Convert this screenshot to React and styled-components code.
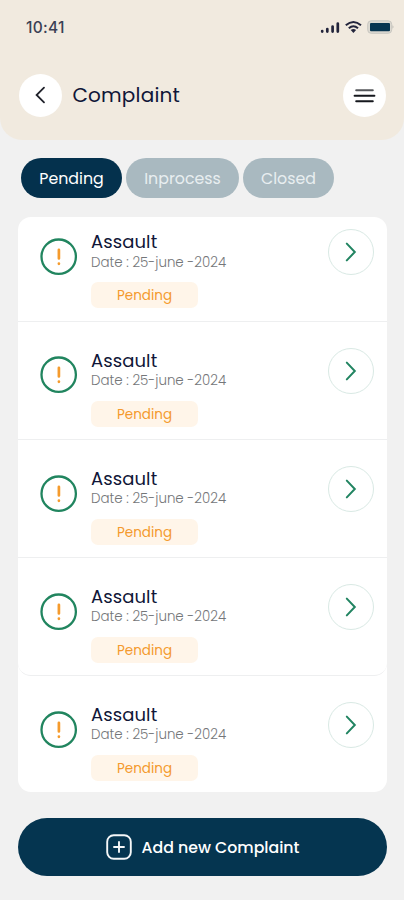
import React from "react";
import styled, { createGlobalStyle } from "styled-components";

const GlobalStyle = createGlobalStyle`
  * { box-sizing: border-box; }
  body { margin: 0; background: #f1f1f1; }
  button { border: 0; padding: 0; font: inherit; }
`;

const Screen = styled.div`
  width: 404px;
  height: 900px;
  display: flex;
  flex-direction: column;
  overflow: hidden;
  background: #f1f1f1;
  font-family: Poppins, Inter, sans-serif;
  color: #101638;
`;

const Header = styled.header`
  height: 140px;
  flex: none;
  background: #f1eadf;
  border-radius: 0 0 22px 22px;
`;

const StatusBar = styled.div`
  display: flex;
  justify-content: space-between;
  align-items: center;
  height: 55px;
  padding: 0 10px 0 26px;
`;

const Clock = styled.span`
  font-size: 15.5px;
  font-weight: 500;
  font-family: Inter, sans-serif;
  letter-spacing: 0.3px;
  color: #3a4054;
`;

const StatusIcons = styled.svg`
  display: block;
  width: 75px;
  height: 16px;
  margin-bottom: 2px;
`;

const TitleBar = styled.div`
  display: flex;
  align-items: center;
  height: 44px;
  margin-top: 18px;
  padding: 0 18px 0 19.4px;
`;

const RoundButton = styled.button`
  width: 43px;
  height: 43px;
  flex: none;
  border-radius: 50%;
  background: #fff;
  display: grid;
  place-items: center;
`;

const Title = styled.h1`
  flex: 1;
  margin: 0 0 0 10px;
  font-size: 20px;
  line-height: 30px;
  font-weight: 400;
  letter-spacing: 0.2px;
`;

const Tabs = styled.nav`
  display: flex;
  gap: 4px;
  margin: 18px 0 0 21px;
`;

const Tab = styled.button`
  width: ${(p) => p.$width}px;
  height: 40px;
  border-radius: 20px;
  font-size: 15.8px;
  color: ${(p) => (p.$active ? "#fff" : "#e8eef0")};
  background: ${(p) => (p.$active ? "#04314d" : "#a9b9c0")};
`;

const List = styled.ul`
  list-style: none;
  margin: 19px 17px 0 18px;
  padding: 0;
  flex: none;
  height: 575px;
  background: #fff;
  border-radius: 13px;
`;

const Row = styled.li`
  display: flex;
  align-items: flex-start;
  height: 118.1px;
  padding: 26.2px 13px 0 22px;
  border-bottom: 1.5px solid #eeeff0;
  &:first-child { height: 104.5px; padding-top: 12.3px; }
  &:nth-child(4) { border-radius: 0 0 13px 13px; }
  &:last-child { border-bottom: 0; }
`;

const AlertIcon = styled.svg`
  flex: none;
  width: 38px;
  height: 38px;
  margin-top: 8.8px;
`;

const Details = styled.div`
  flex: 1;
  margin-left: 13px;
  display: flex;
  flex-direction: column;
  align-items: flex-start;
  white-space: nowrap;
`;

const Name = styled.div`
  font-size: 18px;
  line-height: 26px;
  letter-spacing: 0.1px;
`;

const DateText = styled.div`
  margin-top: -0.5px;
  font-size: 13.4px;
  line-height: 16px;
  font-weight: 300;
  color: #747679;
`;

const Badge = styled.div`
  width: 107px;
  height: 26px;
  margin-top: 11.4px;
  border-radius: 7px;
  background: #fff5e9;
  color: #f49a2d;
  font-size: 13.5px;
  line-height: 27px;
  text-align: center;
`;

const OpenButton = styled(RoundButton)`
  width: 46px;
  height: 46px;
  border: 1px solid #d9e9e4;
`;

const AddButton = styled.button`
  flex: none;
  height: 58px;
  margin: 26px 17px 0 18px;
  border-radius: 29px;
  background: #053550;
  color: #fff;
  display: flex;
  align-items: center;
  justify-content: center;
  gap: 10px;
  font-size: 15.75px;
  font-weight: 500;
`;

const tabs = [
  { label: "Pending", width: 101, active: true },
  { label: "Inprocess", width: 113 },
  { label: "Closed", width: 91 },
];

const complaints = Array.from({ length: 5 }, (_, id) => ({
  id,
  name: "Assault",
  date: "Date : 25-june -2024",
  status: "Pending",
}));

function Status() {
  return (
    <StatusIcons viewBox="0 0 75 16" fill="none">
      <path
        d="M3.2 12v.6M8.3 10v2.6M13.6 7.5v5.1M18.8 4.5v8.1"
        stroke="#22243b"
        strokeWidth="2.7"
        strokeLinecap="round"
      />
      <path
        d="M26.8 6.3Q34.4-.4 42 6.3M29.8 9.3Q34.4 5.1 39 9.3"
        stroke="#22243b"
        strokeWidth="2"
      />
      <path d="M31.7 11.1q2.7-2.2 5.4 0l-2.7 3z" fill="#22243b" />
      <rect x="48.7" y="1.8" width="24" height="12.5" rx="3.5" fill="#dcd9d1" stroke="#c9c7c1" />
      <path d="M73.6 6.3q1.6 1.7 0 3.4z" fill="#aaaaa6" />
      <rect x="51" y="4" width="20" height="8.3" rx="1" fill="#073550" />
    </StatusIcons>
  );
}

export default function App() {
  return (
    <Screen>
      <GlobalStyle />
      <Header>
        <StatusBar>
          <Clock>10:41</Clock>
          <Status />
        </StatusBar>
        <TitleBar>
          <RoundButton aria-label="Back">
            <svg width="20" height="20" fill="none" stroke="#20222b" strokeWidth="1.8" strokeLinecap="round">
              <path d="M13 2.6 5.6 10l7.4 7.4" />
            </svg>
          </RoundButton>
          <Title>Complaint</Title>
          <RoundButton aria-label="Menu">
            <svg width="24" height="18" fill="none" stroke="#15171d" strokeWidth="2" strokeLinecap="round">
              <path d="M3.2 4.2h16.6" stroke="#55575b" />
              <path d="M1.6 9.7h19.8M3.2 15.2h16.6" />
            </svg>
          </RoundButton>
        </TitleBar>
      </Header>
      <Tabs>
        {tabs.map((t) => (
          <Tab key={t.label} $width={t.width} $active={t.active}>
            {t.label}
          </Tab>
        ))}
      </Tabs>
      <List>
        {complaints.map((c) => (
          <Row key={c.id}>
            <AlertIcon viewBox="0 0 38 38" fill="none">
              <circle cx="18.7" cy="18.7" r="17.2" stroke="#21855f" strokeWidth="2.3" />
              <path d="M18.9 11.8v8.7M18.9 25.6v.2" stroke="#f59b2d" strokeWidth="2.7" strokeLinecap="round" />
            </AlertIcon>
            <Details>
              <Name>{c.name}</Name>
              <DateText>{c.date}</DateText>
              <Badge>{c.status}</Badge>
            </Details>
            <OpenButton aria-label="Open complaint">
              <svg width="20" height="22" fill="none" stroke="#218461" strokeWidth="2" strokeLinecap="round">
                <path d="M5.8 2.6 13.8 11l-8 8.4" />
              </svg>
            </OpenButton>
          </Row>
        ))}
      </List>
      <AddButton>
        <svg width="26" height="26" fill="none" stroke="#f5f7f8" strokeWidth="1.9" strokeLinecap="round">
          <rect x="1.2" y="1.2" width="23.6" height="23.6" rx="6.5" />
          <path d="M13 8v10M8 13h10" />
        </svg>
        Add new Complaint
      </AddButton>
    </Screen>
  );
}
